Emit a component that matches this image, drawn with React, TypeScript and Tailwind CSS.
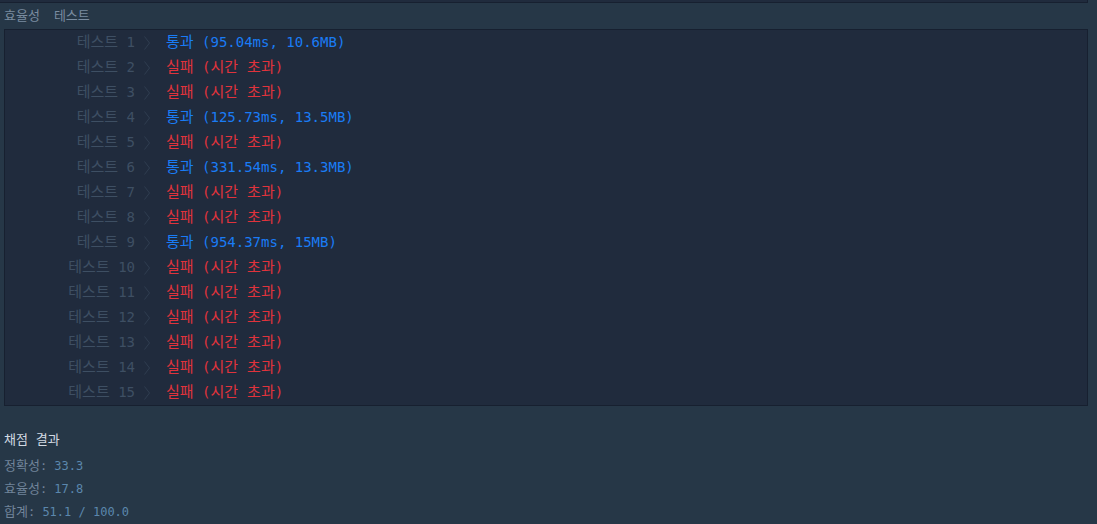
import React from "react"

type Row = { n: number; pass: boolean; detail: string }

const rows: Row[] = [
  { n: 1, pass: true, detail: "95.04ms, 10.6MB" },
  { n: 2, pass: false, detail: "" },
  { n: 3, pass: false, detail: "" },
  { n: 4, pass: true, detail: "125.73ms, 13.5MB" },
  { n: 5, pass: false, detail: "" },
  { n: 6, pass: true, detail: "331.54ms, 13.3MB" },
  { n: 7, pass: false, detail: "" },
  { n: 8, pass: false, detail: "" },
  { n: 9, pass: true, detail: "954.37ms, 15MB" },
  { n: 10, pass: false, detail: "" },
  { n: 11, pass: false, detail: "" },
  { n: 12, pass: false, detail: "" },
  { n: 13, pass: false, detail: "" },
  { n: 14, pass: false, detail: "" },
  { n: 15, pass: false, detail: "" },
]

const mono = "font-['DejaVu_Sans_Mono','Noto_Sans_CJK_KR',monospace]"

// Hangul is drawn a touch larger than the latin mono text, like the original
function Ko({ children, size = "text-[15px]" }: { children: React.ReactNode; size?: string }) {
  return <span className={size}>{children}</span>
}

function Chevron() {
  return (
    <svg width="8" height="16" viewBox="0 0 8 16" className="shrink-0">
      <polyline points="1.5,1.5 6.5,8 1.5,14.5" fill="none" stroke="#2f3d50" strokeWidth="1" />
    </svg>
  )
}

export default function App() {
  return (
    <div className={`min-h-[524px] w-full bg-[#263747] ${mono}`}>
      {/* previous panel edge */}
      <div className="mr-[9px] h-[3px] border-r border-b border-[#172030] bg-[#202b3d]" />

      {/* tabs */}
      <div className="flex h-[26px] items-center gap-[14px] pl-[4px] text-[13px] text-[#7a8ca0]">
        <span>효율성</span>
        <span>테스트</span>
      </div>

      {/* result table */}
      <div className="ml-[4px] mr-[9px] border border-[#172030] bg-[#202b3d]">
        {rows.map((r) => (
          <div key={r.n} className="flex h-[25px] items-center text-[14px] whitespace-pre">
            <div className="w-[130px] text-right text-[#3e4f63]">
              <Ko>테스트</Ko> {r.n}
            </div>
            <div className="ml-[8px] w-[23px]">
              <Chevron />
            </div>
            <div className={r.pass ? "text-[#1a7cf5]" : "text-[#e1333c]"}>
              {r.pass ? (
                <>
                  <Ko>통과</Ko> ({r.detail})
                </>
              ) : (
                <>
                  <Ko>실패</Ko> (<Ko>시간 초과</Ko>)
                </>
              )}
            </div>
          </div>
        ))}
      </div>

      {/* summary */}
      <div className="pl-[4px] pt-[22px] text-[12px]">
        <div className="flex h-[23px] items-center text-[13px] text-[#d2dae3]">채점 결과</div>
        <div className="mt-[3px] flex h-[23px] items-center whitespace-pre text-[#71849a]">
          <Ko size="text-[13px]">정확성</Ko>: <span className="text-[#5b87ad]">33.3</span>
        </div>
        <div className="flex h-[23px] items-center whitespace-pre text-[#71849a]">
          <Ko size="text-[13px]">효율성</Ko>: <span className="text-[#5b87ad]">17.8</span>
        </div>
        <div className="flex h-[23px] items-center whitespace-pre text-[#71849a]">
          <Ko size="text-[13px]">합계</Ko>: <span className="text-[#5b87ad]">51.1 / 100.0</span>
        </div>
      </div>
    </div>
  )
}
